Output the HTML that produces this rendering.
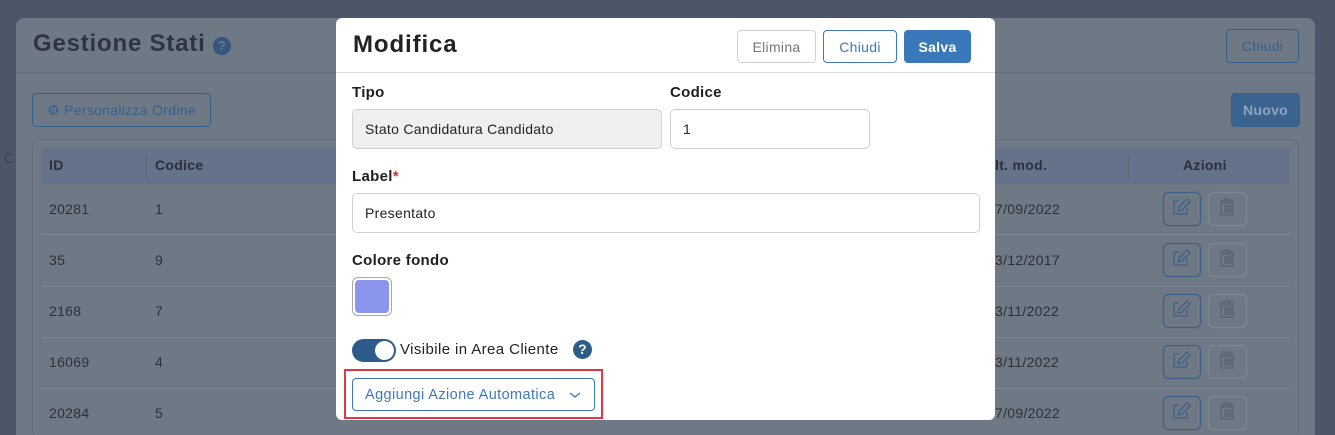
<!DOCTYPE html>
<html><head><meta charset="utf-8">
<style>
*{box-sizing:border-box;margin:0;padding:0}
html,body{width:1335px;height:435px;overflow:hidden}
body{background:#4b5668;font-family:"Liberation Sans",sans-serif;position:relative;color:#2f3338;letter-spacing:0.3px}
.a{position:absolute}
.card{left:16px;top:18px;width:1299px;height:417px;background:#6f7986;border-radius:8px 8px 0 0}
.bt{position:absolute;border:1px solid #36608c;border-radius:4px;color:#36608c;font-size:14px;display:flex;align-items:center;justify-content:center}
.row{position:absolute;left:41px;width:1249px;height:1px;background:#7e8895}
.cell{position:absolute;font-size:14px;color:#2c3038}
.modal{left:336px;top:18px;width:659px;height:402px;background:#fff;border-radius:6px}
.lbl{position:absolute;font-weight:bold;font-size:15px;color:#1f1f1f}
.inp{position:absolute;border:1px solid #cfd2d6;border-radius:5px;font-size:14px;color:#222;display:flex;align-items:center;padding-left:12px}
</style></head><body>
<div class="a" style="left:4px;top:150px;font-size:14px;color:#39414d">C</div>
<div class="a card"></div>
<div class="a" style="left:33px;top:30px;font-size:24px;font-weight:bold;color:#2f3540;letter-spacing:0.8px">Gestione Stati</div>
<div class="a" style="left:213px;top:37px;width:18px;height:18px;border-radius:50%;background:#33567c;color:#6f7986;font-size:13px;font-weight:bold;text-align:center;line-height:18px">?</div>
<div class="a" style="left:16px;top:72px;width:1299px;height:1px;background:#646e7b"></div>
<div class="bt" style="left:1226px;top:29px;width:73px;height:34px">Chiudi</div>
<div class="bt" style="left:32px;top:93px;width:179px;height:34px;font-size:14px">⚙ Personalizza Ordine</div>
<div class="bt" style="left:1231px;top:93px;width:69px;height:34px;background:#3a638f;color:#8ea3bd;font-weight:bold">Nuovo</div>
<div class="a" style="left:32px;top:139px;width:1267px;height:300px;border:1px solid #656f7c;border-radius:8px"></div>
<div class="a" style="left:41px;top:148px;width:1249px;height:36px;background:#64728a"></div>
<div class="cell" style="left:49px;top:157px;font-weight:bold">ID</div>
<div class="cell" style="left:155px;top:157px;font-weight:bold">Codice</div>
<div class="cell" style="left:995px;top:157px;font-weight:bold">lt. mod.</div>
<div class="cell" style="left:1183px;top:157px;font-weight:bold">Azioni</div>
<div class="a" style="left:146px;top:154px;width:1px;height:24px;background:#5a6779"></div>
<div class="a" style="left:1128px;top:154px;width:1px;height:24px;background:#5a6779"></div>
<div class="row" style="top:234px"></div><div class="row" style="top:286px"></div><div class="row" style="top:337px"></div><div class="row" style="top:388px"></div>
<div class="cell" style="left:49px;top:201px">20281</div><div class="cell" style="left:155px;top:201px">1</div><div class="cell" style="left:995px;top:201px">7/09/2022</div>
<div class="cell" style="left:49px;top:252px">35</div><div class="cell" style="left:155px;top:252px">9</div><div class="cell" style="left:995px;top:252px">3/12/2017</div>
<div class="cell" style="left:49px;top:303px">2168</div><div class="cell" style="left:155px;top:303px">7</div><div class="cell" style="left:995px;top:303px">3/11/2022</div>
<div class="cell" style="left:49px;top:354px">16069</div><div class="cell" style="left:155px;top:354px">4</div><div class="cell" style="left:995px;top:354px">3/11/2022</div>
<div class="cell" style="left:49px;top:405px">20284</div><div class="cell" style="left:155px;top:405px">5</div><div class="cell" style="left:995px;top:405px">7/09/2022</div>
<svg class="a" style="left:0;top:0" width="1335" height="435">
<g fill="none" stroke-width="1.3">
<g id="r"><rect x="1163.5" y="192.5" width="37" height="33" rx="5" stroke="#3d6186"/><rect x="1208.5" y="192.5" width="38" height="33" rx="5" stroke="#7d8793"/>
<path d="M1174 201h5M1174 201v13h13v-6M1178 211l1-4 8-8 3 3-8 8z" stroke="#3d6186"/>
<path d="M1220 201h14M1224 201v-2h6v2M1221 203h12v12h-12zM1225 205v8M1227 205v8M1229 205v8M1231 205v8" stroke="#586270"/></g>
<use href="#r" y="51"/><use href="#r" y="102"/><use href="#r" y="153"/><use href="#r" y="204"/>
</g></svg>
<div class="a modal"></div>
<div class="a" style="left:353px;top:31px;font-size:24px;font-weight:bold;color:#222;letter-spacing:0.9px">Modifica</div>
<div class="bt" style="left:737px;top:30px;width:79px;height:33px;border-color:#cfd2d6;color:#777">Elimina</div>
<div class="bt" style="left:823px;top:30px;width:74px;height:33px;color:#3f79b8;border-color:#3f79b8">Chiudi</div>
<div class="bt" style="left:904px;top:30px;width:67px;height:33px;background:#3a79b9;border-color:#3a79b9;color:#fff;font-weight:bold">Salva</div>
<div class="a" style="left:336px;top:72px;width:659px;height:1px;background:#d6d8db"></div>
<div class="lbl" style="left:352px;top:84px">Tipo</div>
<div class="lbl" style="left:670px;top:84px">Codice</div>
<div class="inp" style="left:352px;top:109px;width:310px;height:40px;background:#efefef">Stato Candidatura Candidato</div>
<div class="inp" style="left:670px;top:109px;width:200px;height:40px">1</div>
<div class="lbl" style="left:352px;top:168px">Label<span style="color:#e0262f">*</span></div>
<div class="inp" style="left:352px;top:193px;width:628px;height:40px">Presentato</div>
<div class="lbl" style="left:352px;top:252px">Colore fondo</div>
<div class="a" style="left:352px;top:277px;width:40px;height:39px;border:1px solid #a7a7ad;border-radius:6px;padding:2px;background:#fff"><div style="width:100%;height:100%;background:#8b95ec;border-radius:4px"></div></div>
<div class="a" style="left:352px;top:339px;width:44px;height:23px;border-radius:12px;background:#2d5b8a"><div style="position:absolute;right:2px;top:2px;width:19px;height:19px;border-radius:50%;background:#fff"></div></div>
<div class="a" style="left:400px;top:341px;font-size:15px;color:#222;letter-spacing:0.4px">Visibile in Area Cliente</div>
<div class="a" style="left:573px;top:340px;width:19px;height:19px;border-radius:50%;background:#2d5b8a;color:#fff;font-size:14px;font-weight:bold;text-align:center;line-height:19px">?</div>
<div class="a" style="left:344px;top:369px;width:259px;height:50px;border:2px solid #e23645"></div>
<div class="bt" style="left:352px;top:378px;width:243px;height:33px;color:#3f79b8;border-color:#3f79b8;justify-content:flex-start;padding-left:12px;font-size:14.5px;letter-spacing:0.4px">Aggiungi Azione Automatica<svg style="margin-left:14px" width="12" height="8"><path d="M1 2l5 4 5-4" fill="none" stroke="#3f79b8" stroke-width="1.4"/></svg></div>
</body></html>
